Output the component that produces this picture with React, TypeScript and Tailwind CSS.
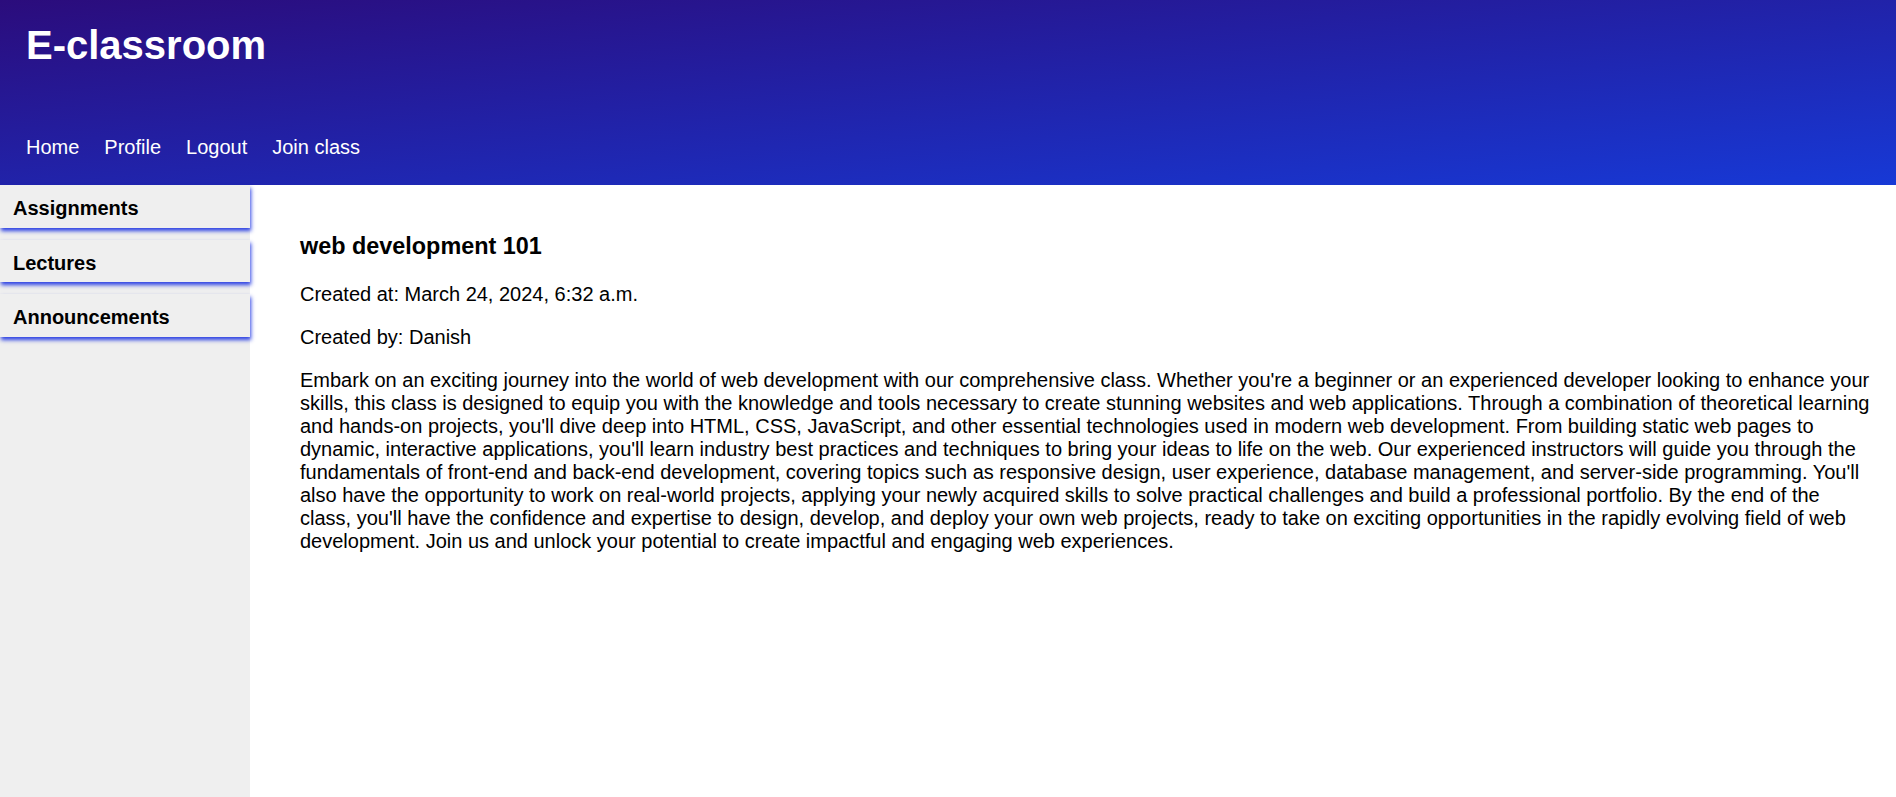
import React from 'react';

const navLinks = ['Home', 'Profile', 'Logout', 'Join class'];
const sideItems = ['Assignments', 'Lectures', 'Announcements'];

const description =
  "Embark on an exciting journey into the world of web development with our comprehensive class. Whether you're a beginner or an experienced developer looking to enhance your skills, this class is designed to equip you with the knowledge and tools necessary to create stunning websites and web applications. Through a combination of theoretical learning and hands-on projects, you'll dive deep into HTML, CSS, JavaScript, and other essential technologies used in modern web development. From building static web pages to dynamic, interactive applications, you'll learn industry best practices and techniques to bring your ideas to life on the web. Our experienced instructors will guide you through the fundamentals of front-end and back-end development, covering topics such as responsive design, user experience, database management, and server-side programming. You'll also have the opportunity to work on real-world projects, applying your newly acquired skills to solve practical challenges and build a professional portfolio. By the end of the class, you'll have the confidence and expertise to design, develop, and deploy your own web projects, ready to take on exciting opportunities in the rapidly evolving field of web development. Join us and unlock your potential to create impactful and engaging web experiences.";

export default function App() {
  return (
    <div className="min-h-screen flex flex-col bg-white text-black font-['Liberation_Sans',Arial,sans-serif] text-[20px] leading-[1.15]">
      {/* Header */}
      <header className="h-[185px] shrink-0 bg-[linear-gradient(to_bottom_right,#2b0c7c,#1739d6)] px-[26px] pt-[22px]">
        <h1 className="text-[40px] font-bold text-white leading-[46px]">E-classroom</h1>
        <nav className="mt-[68px] flex gap-[25px] leading-[23px]">
          {navLinks.map((link) => (
            <a key={link} href="#" className="text-white">
              {link}
            </a>
          ))}
        </nav>
      </header>

      <div className="flex flex-1">
        {/* Sidebar */}
        <aside className="w-[250px] shrink-0 bg-[#efefef] flex flex-col gap-[12px]">
          {sideItems.map((item) => (
            <div
              key={item}
              className="h-[42.5px] bg-[#efefef] pl-[13px] pt-[12px] font-bold leading-[23px] shadow-[1px_3px_4px_rgba(10,35,225,0.85)]"
            >
              {item}
            </div>
          ))}
        </aside>

        {/* Main */}
        <main className="flex-1 pl-[50px] pr-[25px] pt-[25px]">
          <h3 className="text-[23.4px] font-bold leading-[27px] mt-[23px]">web development 101</h3>
          <p className="mt-[23px]">Created at: March 24, 2024, 6:32 a.m.</p>
          <p className="mt-[20px]">Created by: Danish</p>
          <p className="mt-[20px]">{description}</p>
        </main>
      </div>
    </div>
  );
}
